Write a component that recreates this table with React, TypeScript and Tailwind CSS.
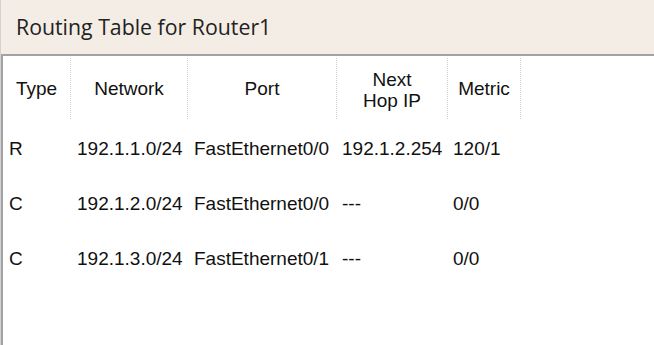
import React from "react";

const rows = [
  { type: "R", net: "192.1.1.0/24", port: "FastEthernet0/0", hop: "192.1.2.254", metric: "120/1" },
  { type: "C", net: "192.1.2.0/24", port: "FastEthernet0/0", hop: "---", metric: "0/0" },
  { type: "C", net: "192.1.3.0/24", port: "FastEthernet0/1", hop: "---", metric: "0/0" },
];

const cols = ["w-[68px]", "w-[117px]", "w-[149px]", "w-[111px]", "w-[73px]"];

export default function App() {
  return (
    <div className="w-[654px] h-[345px] overflow-hidden bg-white border-l border-[#d2d2d2] flex flex-col">
      <div className="h-[54px] shrink-0 bg-[#f4ede5] flex items-center pl-[15px] pb-[1px]">
        <span className="text-[21.3px] text-[#222] leading-none" style={{ fontFamily: '"Open Sans", sans-serif' }}>
          Routing Table for Router1
        </span>
      </div>
      <div
        className="flex-1 border-t-2 border-l-2 border-[#a2a2a2] bg-white text-[19px] text-[#111]"
        style={{ fontFamily: '"Liberation Sans", Arial, sans-serif' }}
      >
        <div className="flex h-[63px] pt-[2px]">
          {["Type", "Network", "Port", "Next Hop IP", "Metric"].map((h, i) => (
            <div
              key={h}
              className={`${cols[i]} shrink-0 border-r border-dotted border-[#cfcfcf] flex items-center justify-center text-center leading-[21px]`}
            >
              {h === "Next Hop IP" ? (
                <span className="pt-[2px]">
                  Next
                  <br />
                  Hop IP
                </span>
              ) : (
                h
              )}
            </div>
          ))}
        </div>
        <div className="pt-[2px]">
          {rows.map((r, idx) => (
            <div key={idx} className="flex h-[55px] items-center leading-[22px]">
              <div className={`${cols[0]} shrink-0 pl-[6px]`}>{r.type}</div>
              <div className={`${cols[1]} shrink-0 pl-[6px] whitespace-nowrap`}>{r.net}</div>
              <div className={`${cols[2]} shrink-0 pl-[6px] whitespace-nowrap`}>{r.port}</div>
              <div className={`${cols[3]} shrink-0 pl-[5px] whitespace-nowrap`}>{r.hop}</div>
              <div className={`${cols[4]} shrink-0 pl-[5px] whitespace-nowrap`}>{r.metric}</div>
            </div>
          ))}
        </div>
      </div>
    </div>
  );
}
